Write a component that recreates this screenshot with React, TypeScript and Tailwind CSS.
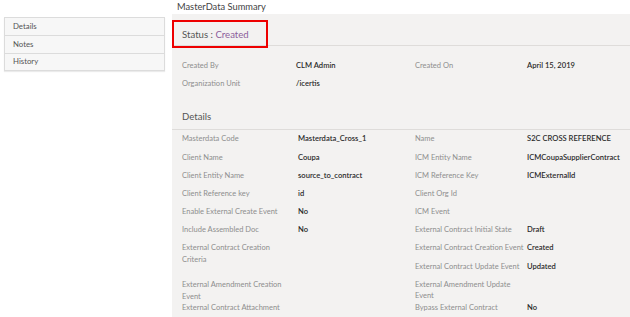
import React from 'react';

type Row = { label: React.ReactNode; value?: string; h?: string };

const leftRows: Row[] = [
    { label: 'Masterdata Code', value: 'Masterdata_Cross_1' },
    { label: 'Client Name', value: 'Coupa' },
    { label: 'Client Entity Name', value: 'source_to_contract' },
    { label: 'Client Reference key', value: 'id' },
    { label: 'Enable External Create Event', value: 'No' },
    { label: 'Include Assembled Doc', value: 'No' },
    { label: <>External Contract Creation<br />Criteria</>, h: 'h-[37px]' },
    { label: <>External Amendment Creation<br />Event</>, h: 'h-[23px]' },
    { label: 'External Contract Attachment' },
];

const rightRows: Row[] = [
    { label: 'Name', value: 'S2C CROSS REFERENCE' },
    { label: 'ICM Entity Name', value: 'ICMCoupaSupplierContract' },
    { label: 'ICM Reference Key', value: 'ICMExternalId' },
    { label: 'Client Org Id' },
    { label: 'ICM Event' },
    { label: 'External Contract Initial State', value: 'Draft' },
    { label: 'External Contract Creation Event', value: 'Created' },
    { label: 'External Contract Update Event', value: 'Updated' },
    { label: <>External Amendment Update<br />Event</>, h: 'h-[23px]' },
    { label: 'Bypass External Contract', value: 'No' },
];

const Field = ({ row, labelW }: { row: Row; labelW: string }) => (
    <div className={`flex ${row.h ?? 'h-[18.2px]'}`}>
        <div className={`${labelW} shrink-0 text-[7.5px] leading-[11.5px] text-[#8e8e8e] whitespace-nowrap`}>{row.label}</div>
        <div className="text-[7.6px] leading-[11.5px] font-semibold text-[#2b2b2b] whitespace-nowrap">{row.value}</div>
    </div>
);

export default function App() {
    return (
        <div className="w-[630px] h-[317px] overflow-hidden bg-white flex" style={{ fontFamily: 'Lato, "Open Sans", sans-serif' }}>
            {/* Left nav */}
            <div className="w-[172px] shrink-0 pt-[17px] pl-[4px]">
                <div className="w-[161px] border border-[#dcdcdc] bg-[#f7f7f7] shadow-[0_1px_1px_rgba(0,0,0,0.08)]">
                    {['Details', 'Notes', 'History'].map((t, i) => (
                        <div key={t} className={`h-[17.3px] pl-[8px] flex items-center text-[7.8px] text-[#555] ${i > 0 ? 'border-t border-[#dcdcdc]' : ''}`}>
                            {t}
                        </div>
                    ))}
                </div>
            </div>

            {/* Main */}
            <div className="flex-1 flex flex-col relative">
                <div className="h-[17px] pl-[5px] flex items-center text-[9.3px] text-[#444]">MasterData Summary</div>

                <div className="flex-1 bg-[#f3f2f1]">
                    <div className="h-[32px] border-b border-[#dedcda] pl-[10px] flex items-end pb-[3px]">
                        <span className="text-[9.6px] leading-[14px] text-[#555]">
                            Status : <span className="text-[#8d5f9c]">Created</span>
                        </span>
                    </div>

                    <div className="pl-[10px] pt-[14px] grid grid-cols-[233px_1fr]">
                        <div>
                            <Field row={{ label: 'Created By', value: 'CLM Admin' }} labelW="w-[114px]" />
                            <Field row={{ label: 'Organization Unit', value: '/icertis' }} labelW="w-[114px]" />
                        </div>
                        <div>
                            <Field row={{ label: 'Created On', value: 'April 15, 2019' }} labelW="w-[112px]" />
                        </div>
                    </div>

                    <div className="mt-[6px] border-b border-[#dedcda] pl-[10px] pb-[3px]">
                        <span className="text-[9.6px] leading-[14px] text-[#555]">Details</span>
                    </div>

                    <div className="pl-[10px] pt-[3px] grid grid-cols-[233px_1fr]">
                        <div>
                            {leftRows.map((r, i) => <Field key={i} row={r} labelW="w-[116px]" />)}
                        </div>
                        <div>
                            {rightRows.map((r, i) => <Field key={i} row={r} labelW="w-[112px]" />)}
                        </div>
                    </div>
                </div>

                {/* annotation highlight */}
                <div className="absolute left-0 top-[20px] w-[96px] h-[28px] border-2 border-[#ee0000]" />
            </div>
        </div>
    );
}
